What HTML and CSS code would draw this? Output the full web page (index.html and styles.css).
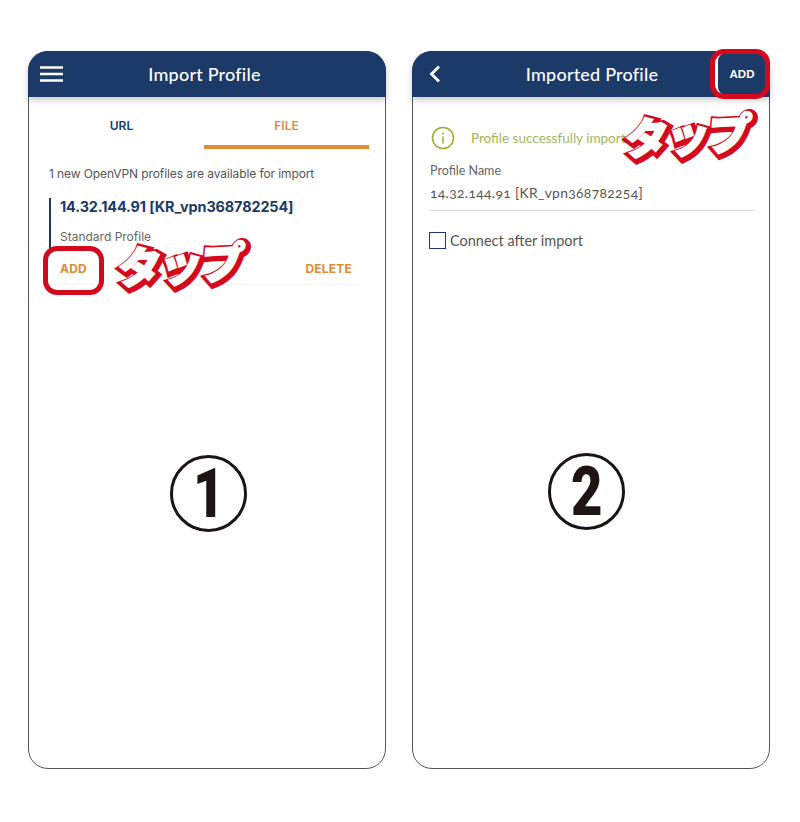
FILE: index.html
```html
<!DOCTYPE html>
<html lang="ja">
<head>
<meta charset="utf-8">
<title>Import Profile</title>
<link rel="stylesheet" href="styles.css">
</head>
<body>
<main class="page">
  <section class="phone">
    <header class="bar">
      <svg class="menu" width="24" height="16" viewBox="0 0 24 16" aria-hidden="true"><path d="M0 1.500h23M0 8h23M0 14.500h23" stroke="#fff" stroke-width="2.400" fill="none"/></svg>
      <h1 class="title title-import">Import Profile</h1>
    </header>
    <div class="tabs">
      <div class="tab">URL</div>
      <div class="tab tab-on">FILE</div>
    </div>
    <p class="notice">1 new OpenVPN profiles are available for import</p>
    <div class="profile">
      <div class="profile-head">
        <div class="profile-name">14.32.144.91 [KR_vpn368782254]</div>
        <div class="profile-type">Standard Profile</div>
      </div>
      <div class="actions"><span>ADD</span><span>DELETE</span></div>
    </div>
    <div class="step-wrap step-one"><div class="step"><span class="digit">1</span></div></div>
    <div class="ring ring-add"></div>
    <div class="tap tap-left" data-t="タップ">タップ</div>
  </section>
  <section class="phone">
    <header class="bar">
      <svg class="back" width="12" height="18" viewBox="0 0 12 18" aria-hidden="true"><path d="M10 1.500 2.500 9l7.500 7.500" stroke="#fff" stroke-width="2.800" fill="none"/></svg>
      <h1 class="title title-imported">Imported Profile</h1>
      <span class="bar-add">ADD</span>
    </header>
    <div class="status">
      <svg width="24" height="24" viewBox="0 0 24 24" aria-hidden="true"><circle cx="12" cy="12" r="10.500" fill="none" stroke="#95b02c" stroke-width="1.500"/><path d="M12 6.500v2M12 10.500v7" stroke="#95b02c" stroke-width="1.500" fill="none"/></svg>
      <span>Profile successfully imported</span>
    </div>
    <div class="field">
      <div class="field-label">Profile Name</div>
      <div class="field-value">14.32.144.91 [KR_vpn368782254]</div>
    </div>
    <div class="check"><span class="box"></span><span>Connect after import</span></div>
    <div class="step-wrap step-two"><div class="step"><span class="digit">2</span></div></div>
    <div class="ring ring-top"></div>
    <div class="tap tap-right" data-t="タップ">タップ</div>
  </section>
</main>
</body>
</html>
```
FILE: styles.css
```css
* { box-sizing: border-box; }
html, body { margin: 0; background: #fff; }
body { width: 800px; height: 822px; overflow: hidden; font-family: Lato, "Noto Sans CJK JP", sans-serif; }
.page { display: flex; gap: 26px; padding: 51px 0 0 28px; }
.phone { position: relative; width: 358px; height: 718px; border: 1px solid #555; border-radius: 20px; background: #fff; display: flex; flex-direction: column; }
.bar { position: relative; height: 46px; margin: -1px -1px 0; background: #1b3a68; border-radius: 20px 20px 0 0; box-shadow: 0 3px 6px rgba(0,0,0,.22); display: flex; align-items: center; justify-content: center; color: #fff; flex: none; }
.menu { position: absolute; left: 12px; top: 15px; }
.back { position: absolute; left: 17px; top: 14px; }
.title { margin: 0; font-size: 18px; font-weight: 500; letter-spacing: .2px; }
.title-import { padding-right: 5px; }
.title-imported { padding-left: 2px; }
.bar-add { position: absolute; right: 4px; top: 2px; width: 48px; height: 42px; border-radius: 8px; background: #1b3a68; box-shadow: -3px 0 0 #fff; display: flex; align-items: center; justify-content: center; font: 700 11.500px "Liberation Sans", sans-serif; }
.tabs { display: flex; margin: 0 16px 0 10px; height: 52px; }
.tab { flex: 1; display: flex; align-items: center; justify-content: center; font: 600 12px Inter, sans-serif; color: #1b3a68; border-bottom: 4px solid transparent; padding-top: 8px; }
.tab-on { color: #e08a35; border-bottom-color: #e58a32; }
.notice { margin: 17px 0 0 20px; font: 400 12px/16px Inter, sans-serif; letter-spacing: -.1px; color: #555; }
.profile { margin: 16px 24px 0 20px; border-bottom: 1px solid #f4f4f4; height: 87px; display: flex; flex-direction: column; }
.profile-head { border-left: 2px solid #1b3a68; padding-left: 9px; height: 52px; }
.profile-name { font: 700 14.400px/18px Inter, sans-serif; color: #1b3a68; letter-spacing: -.1px; }
.profile-type { margin-top: 13px; font: 400 12px/16px Inter, sans-serif; color: #666; }
.actions { display: flex; justify-content: space-between; margin-top: 11px; padding: 0 9px 0 11px; font: 700 12px/16px Inter, sans-serif; color: #e08a35; letter-spacing: .2px; }
.status { display: flex; align-items: center; gap: 16px; margin: 29px 0 0 18px; font-size: 13.500px; color: #a3b55a; }
.field { margin: 13px 14px 0 17px; height: 48px; border-bottom: 1px solid #d8d8d8; }
.field-label { font-size: 12.500px; line-height: 16px; color: #666; }
.field-value { margin-top: 5px; font-size: 13.800px; line-height: 18px; color: #555; font-variant-numeric: oldstyle-nums; letter-spacing: .35px; }
.check { display: flex; align-items: center; gap: 4px; margin: 21px 0 0 16px; font-size: 14.500px; color: #555; }
.box { width: 17px; height: 17px; border: 1.500px solid #1b3a68; }
.step-wrap { display: flex; }
.step-one { margin: 170px 0 0 141px; }
.step-two { margin: 204px 0 0 135px; }
.step { width: 77px; height: 77px; border: 3px solid #1a1414; border-radius: 50%; display: flex; align-items: center; justify-content: center; color: #1e1414; }
.digit { font: 900 68px/1 Roboto, sans-serif; transform: scaleX(.8); }
.ring { position: absolute; border: 5px solid #d5091d; border-radius: 14px; }
.ring-add { left: 14px; top: 194px; width: 61px; height: 49px; }
.ring-top { left: 297px; top: -3px; width: 60px; height: 50px; }
.tap { position: absolute; white-space: nowrap; font: 900 43px/1 "Noto Sans CJK JP", sans-serif; letter-spacing: -2px; color: #fff; -webkit-text-stroke: 2px #fff; transform: skewX(-8deg) rotate(-3deg); }
.tap::before { content: attr(data-t); position: absolute; left: 2px; top: 2px; z-index: -1; white-space: nowrap; color: #d5091d; -webkit-text-stroke: 9px #d5091d; }
.tap-left { left: 90px; top: 189px; }
.tap-right { left: 213px; top: 60px; }
```
